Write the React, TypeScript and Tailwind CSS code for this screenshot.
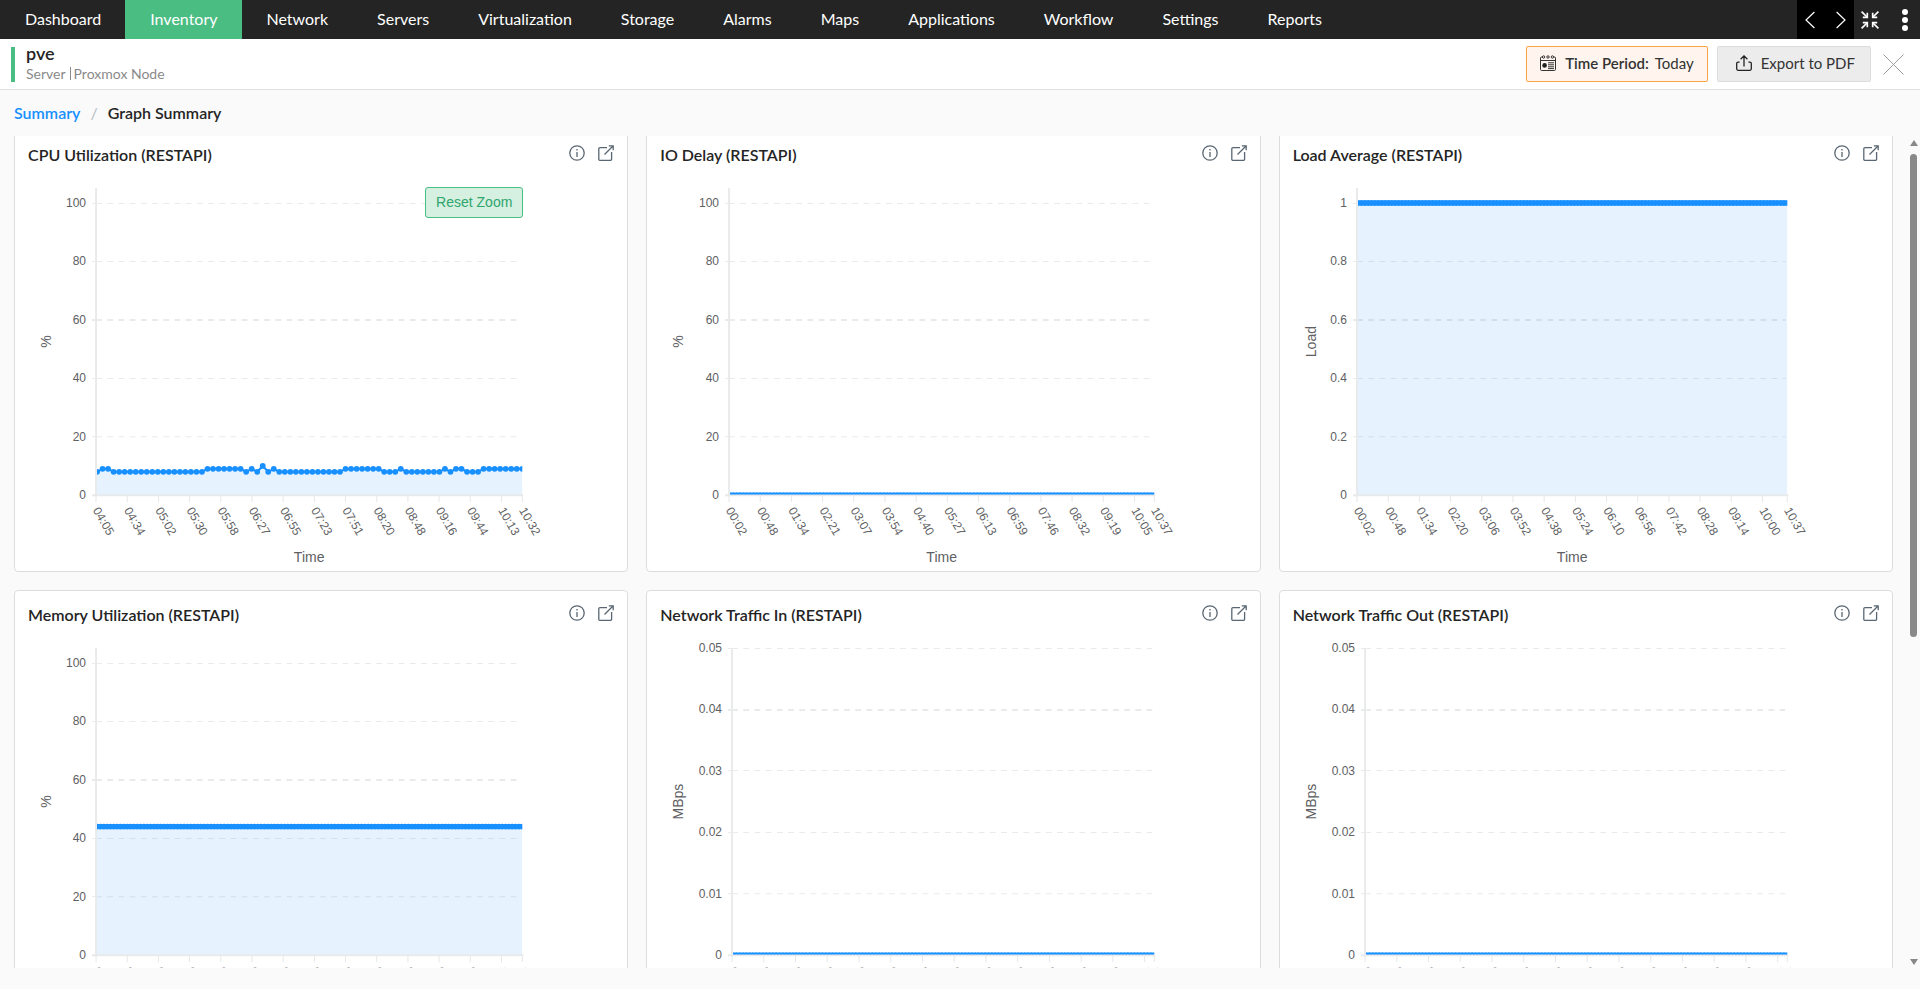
import { useState } from "react";

const NAV_ITEMS = [
  "Dashboard",
  "Inventory",
  "Network",
  "Servers",
  "Virtualization",
  "Storage",
  "Alarms",
  "Maps",
  "Applications",
  "Workflow",
  "Settings",
  "Reports",
];

type ChartData = {
  id: string;
  title: string;
  unit: string;
  // left edge of the plot area
  left: number;
  yLabels: string[];
  // y of the highest gridline, the lowest one is always BOTTOM
  yTop: number;
  axisTop: number;
  boldRow: number;
  xStep: number;
  xLabels: string[];
  values: number[];
  max: number;
  zoomed?: boolean;
};

const RIGHT = 507;
const BOTTOM = 319;

const repeat = (value: number, times: number): number[] => Array(times).fill(value);

const cpuValues = [
  8, 9, 9, ...repeat(8, 17), ...repeat(9, 7), 8, 9, 8, 10, 8, 9, ...repeat(8, 12),
  ...repeat(9, 7), ...repeat(8, 3), 9, ...repeat(8, 7), 9, 8, 9, 9, ...repeat(8, 3), ...repeat(9, 8),
];

const percent = ["100", "80", "60", "40", "20", "0"];
const mbps = ["0.05", "0.04", "0.03", "0.02", "0.01", "0"];

const cpuTimes = ["04:05", "04:34", "05:02", "05:30", "05:58", "06:27", "06:55", "07:23", "07:51", "08:20", "08:48", "09:16", "09:44", "10:13", "10:32"];
const ioTimes = ["00:02", "00:48", "01:34", "02:21", "03:07", "03:54", "04:40", "05:27", "06:13", "06:59", "07:46", "08:32", "09:19", "10:05", "10:37"];
const loadTimes = ["00:02", "00:48", "01:34", "02:20", "03:06", "03:52", "04:38", "05:24", "06:10", "06:56", "07:42", "08:28", "09:14", "10:00", "10:37"];

const CHARTS: ChartData[] = [
  { id: "cpu", title: "CPU Utilization (RESTAPI)", unit: "%", left: 81, yLabels: percent, yTop: 27, axisTop: 12, boldRow: 2, xStep: 31.17, xLabels: cpuTimes, values: cpuValues, max: 100, zoomed: true },
  { id: "io", title: "IO Delay (RESTAPI)", unit: "%", left: 82, yLabels: percent, yTop: 27, axisTop: 12, boldRow: 2, xStep: 31.17, xLabels: ioTimes, values: repeat(0, 128), max: 100 },
  { id: "load", title: "Load Average (RESTAPI)", unit: "Load", left: 77, yLabels: ["1", "0.8", "0.6", "0.4", "0.2", "0"], yTop: 27, axisTop: 12, boldRow: 2, xStep: 31.17, xLabels: loadTimes, values: repeat(1, 128), max: 1 },
  { id: "memory", title: "Memory Utilization (RESTAPI)", unit: "%", left: 81, yLabels: percent, yTop: 27, axisTop: 12, boldRow: 2, xStep: 31.17, xLabels: ioTimes, values: repeat(44, 128), max: 100 },
  { id: "net-in", title: "Network Traffic In (RESTAPI)", unit: "MBps", left: 85, yLabels: mbps, yTop: 12, axisTop: 12, boldRow: 1, xStep: 31.72, xLabels: ioTimes, values: repeat(0, 128), max: 0.05 },
  { id: "net-out", title: "Network Traffic Out (RESTAPI)", unit: "MBps", left: 85, yLabels: mbps, yTop: 12, axisTop: 12, boldRow: 1, xStep: 31.72, xLabels: ioTimes, values: repeat(0, 128), max: 0.05 },
];

function AreaChart({ chart }: { chart: ChartData }) {
  const { id, left, yTop, axisTop, values, max } = chart;
  const points = values.map((value, i) => ({
    x: left + 1 + (i * (RIGHT - left - 1)) / (values.length - 1),
    y: BOTTOM - (value / max) * (BOTTOM - yTop),
  }));
  const line = points.map((p) => `${p.x},${p.y}`).join(" ");
  const rowHeight = (BOTTOM - yTop) / (chart.yLabels.length - 1);
  const tickX = (i: number) => (i === chart.xLabels.length - 1 ? RIGHT : left + i * chart.xStep);
  const middle = (left + RIGHT) / 2;

  return (
    <svg viewBox="0 0 612 395" className="block h-auto w-full font-['Liberation_Sans',Arial,sans-serif]" role="img" aria-label={chart.title}>
      <clipPath id={`${id}-plot`}>
        <rect x={left + 1} y={0} width={RIGHT - left - 1} height={BOTTOM - 1} />
      </clipPath>

      {/* Gridlines and y labels */}
      {chart.yLabels.map((label, i) => {
        const y = yTop + i * rowHeight;
        const bold = i === chart.boldRow;
        const lineY = bold ? Math.ceil(y) : Math.floor(y) + 0.5;
        return (
          <g key={label} stroke="#e9eaeb" strokeWidth={bold ? 2 : 1}>
            {i < chart.yLabels.length - 1 && (
              <line x1={left} x2={RIGHT - 2} y1={lineY} y2={lineY} strokeDasharray="5.8 5.4" />
            )}
            <line x1={left - 4} x2={left} y1={lineY} y2={lineY} />
            <text x={left - 10} y={Math.round(y) + 4} textAnchor="end" fontSize={12} fill="#5e6063" stroke="none">
              {label}
            </text>
          </g>
        );
      })}

      {/* Axes */}
      <line x1={left} x2={left} y1={axisTop} y2={BOTTOM + 1} stroke="#e9eaeb" strokeWidth={2} />
      <line x1={left - 4} x2={RIGHT + 1} y1={BOTTOM} y2={BOTTOM} stroke="#e9eaeb" strokeWidth={2} />
      {chart.xLabels.map((label, i) => (
        <g key={label}>
          <line x1={tickX(i)} x2={tickX(i)} y1={BOTTOM} y2={BOTTOM + 7} stroke="#e6e7e8" />
          <text transform={`translate(${tickX(i)} ${BOTTOM + 13}) rotate(60)`} y={4} fontSize={12} fill="#5e6063">
            {label}
          </text>
        </g>
      ))}

      {/* Series */}
      <g clipPath={`url(#${id}-plot)`}>
        <polygon points={`${left},${BOTTOM} ${line} ${RIGHT},${BOTTOM}`} fill="#1890ff" fillOpacity={0.11} />
        <polyline points={line} fill="none" stroke="#1890ff" strokeWidth={values.length > 100 ? 4 : 2} />
        {points.map((p, i) => (
          <circle key={i} cx={p.x} cy={p.y} r={2.9} fill="#1890ff" />
        ))}
      </g>

      <text x={middle} y={386} textAnchor="middle" fontSize={14} fill="#5e6063">
        Time
      </text>
      <text transform={`translate(36 ${(axisTop + BOTTOM) / 2}) rotate(-90)`} textAnchor="middle" fontSize={14} fill="#5e6063">
        {chart.unit}
      </text>
    </svg>
  );
}

function InfoIcon() {
  return (
    <svg viewBox="0 0 16 16" className="size-4" fill="none" stroke="currentColor" strokeWidth={1.3}>
      <circle cx="8" cy="8" r="7.2" />
      <path d="M8 7v5M8 4v1.4" />
    </svg>
  );
}

function OpenIcon() {
  return (
    <svg viewBox="0 0 16 16" className="size-4" fill="none" stroke="currentColor" strokeWidth={1.3}>
      <path d="M9 2.6H2A1.2 1.2 0 0 0 .8 3.8v10.4A1.2 1.2 0 0 0 2 15.4h10.4a1.2 1.2 0 0 0 1.2-1.2V7" />
      <path d="M6.5 9.5 15 1M10.8.8h4.4v4.4" />
    </svg>
  );
}

function ChartCard({ chart }: { chart: ChartData }) {
  const [zoomed, setZoomed] = useState(Boolean(chart.zoomed));

  return (
    <section className="relative rounded-[4px] border border-[#dcddde] bg-white">
      <header className="flex h-[45px] items-start justify-between px-[13px] pt-[14px]">
        <h2 className="text-[16px] leading-5 font-semibold text-[#242424]">{chart.title}</h2>
        <div className="flex gap-[13px] text-[#5a6772]">
          <button type="button" aria-label={`About ${chart.title}`}>
            <InfoIcon />
          </button>
          <button type="button" aria-label={`Open ${chart.title}`}>
            <OpenIcon />
          </button>
        </div>
      </header>
      <AreaChart chart={chart} />
      {zoomed && (
        <button
          type="button"
          onClick={() => setZoomed(false)}
          className="absolute top-14 right-[104px] h-[31px] rounded-[3px] border border-[#49bd82] bg-[#d5efe1] px-[10px] pb-[2px] font-['Liberation_Sans',Arial,sans-serif] text-[14px] leading-none text-[#2fa56d]"
        >
          Reset Zoom
        </button>
      )}
    </section>
  );
}

function TopNav() {
  return (
    <nav className="flex h-[39px] items-stretch justify-between bg-[#242424] text-white">
      <div className="flex">
        {NAV_ITEMS.map((item) => (
          <a
            key={item}
            href="#"
            className={`flex items-center pr-6 pb-[2px] pl-[25px] text-[16px] ${item === "Inventory" ? "bg-[#49bd82]" : ""}`}
          >
            {item}
          </a>
        ))}
      </div>
      <div className="flex">
        <div className="flex w-[57px] items-center justify-between bg-black px-2">
          <button type="button" aria-label="Previous">
            <svg viewBox="0 0 10 18" className="h-[18px] w-[10px]" fill="none" stroke="currentColor" strokeWidth={1.2}>
              <path d="M9.4 1 1 9l8.4 8" />
            </svg>
          </button>
          <button type="button" aria-label="Next">
            <svg viewBox="0 0 10 18" className="h-[18px] w-[10px]" fill="none" stroke="currentColor" strokeWidth={1.2}>
              <path d="M.6 1 9 9l-8.400 8" />
            </svg>
          </button>
        </div>
        <button type="button" aria-label="Exit full screen" className="ml-[7px]">
          <svg viewBox="0 0 18 18" className="size-[18px]" fill="none" stroke="currentColor" strokeWidth={1.7}>
            <path d="M.6.6 6 6M17.4.6 12 6M.6 17.4 6 12M17.4 17.4 12 12" />
            <path d="M6.3 1.8v4.5H1.8M11.7 1.8v4.5h4.5M6.3 16.2v-4.5H1.8M11.7 16.2v-4.5h4.5" />
          </svg>
        </button>
        <button type="button" aria-label="More" className="mr-3 ml-[23px]">
          <svg viewBox="0 0 6 22" className="h-[22px] w-[6px]" fill="currentColor">
            <circle cx="3" cy="3" r="3" />
            <circle cx="3" cy="11" r="3" />
            <circle cx="3" cy="19" r="3" />
          </svg>
        </button>
      </div>
    </nav>
  );
}

function DeviceHeader() {
  return (
    <div className="flex h-[51px] items-center justify-between border-b border-[#dfdfdf] bg-white pr-4 pl-[11px]">
      <div className="flex gap-[11px]">
        <div className="my-[2px] w-1 bg-[#49bd82]" />
        <div>
          <h1 className="text-[18px] leading-4 font-semibold text-[#242424]">pve</h1>
          <p className="mt-[3px] flex items-center text-[14px] leading-5 text-[#8a8a8a]">
            Server
            <span className="mr-[3px] ml-1 h-[13px] w-px bg-[#8a8a8a]" />
            Proxmox Node
          </p>
        </div>
      </div>
      <div className="flex items-center text-[15px] text-[#333]">
        <button type="button" className="flex h-9 items-center rounded-[2px] border border-[#f9a544] bg-[#fff5ee] px-[13px] pb-[2px]">
          <svg viewBox="0 0 16 16" className="mr-[9px] size-4" fill="none" stroke="#333" strokeWidth={1}>
            <path d="M2.4 2H1.6A1.1 1.1 0 0 0 .5 3.1v11.3a1.1 1.1 0 0 0 1.1 1.1h12.8a1.1 1.1 0 0 0 1.1-1.1V3.1A1.1 1.1 0 0 0 14.4 2h-.8" />
            <path d="M.5 5.5h15M8 7.8h6M8 9.8h6M8 11.8h6M8 13.6h6" />
            <circle cx="3.6" cy="2" r="1.2" />
            <circle cx="8" cy="2" r="1.2" />
            <circle cx="12.4" cy="2" r="1.2" />
            <circle cx="4.6" cy="10.4" r="2.3" fill="#222" stroke="none" />
          </svg>
          <span className="mr-[6px] font-semibold">Time Period:</span>
          Today
        </button>
        <button type="button" className="ml-[9px] flex h-9 items-center rounded-[2px] border border-[#dcdcdc] bg-[#ececec] pr-[15px] pb-[2px] pl-[18px]">
          <svg viewBox="0 0 16 16" className="mr-[9px] size-4" fill="none" stroke="#222" strokeWidth={1.3}>
            <path d="M3.6 7.2H2A1.3 1.3 0 0 0 .7 8.500v5.3a1.5 1.5 0 0 0 1.5 1.5h11.6a1.5 1.5 0 0 0 1.5-1.5V8.500A1.3 1.3 0 0 0 14 7.2h-1.600M8 11.5V1.2M4.6 4.2 8 .9l3.4 3.3" />
          </svg>
          Export to PDF
        </button>
        <button type="button" aria-label="Close" className="ml-3">
          <svg viewBox="0 0 21 21" className="size-[21px]" fill="none" stroke="#9c9c9c" strokeWidth={1}>
            <path d="M.5.5l20 20M20.5.5l-20 20" />
          </svg>
        </button>
      </div>
    </div>
  );
}

function ScrollTrack() {
  return (
    <div className="flex w-[9px] flex-col items-center pt-1 pb-[3px] text-[#888]" aria-hidden="true">
      <svg viewBox="0 0 8 6" className="h-[6px] w-2" fill="currentColor">
        <path d="M4 0 8 6H0z" />
      </svg>
      <div className="mt-2 flex-1">
        <div className="h-3/5 w-[7px] rounded-full bg-[#888]" />
      </div>
      <svg viewBox="0 0 8 6" className="h-[6px] w-2" fill="currentColor">
        <path d="M4 6 0 0h8z" />
      </svg>
    </div>
  );
}

export default function App() {
  return (
    <div className="flex h-screen flex-col bg-[#fafafa] pb-[21px] font-[Lato,sans-serif]">
      <TopNav />
      <DeviceHeader />

      <div className="flex h-[46px] shrink-0 items-center pl-[14px] text-[16px] font-semibold text-[#242424]">
        <a href="#" className="text-[#1890ff]">
          Summary
        </a>
        <span className="mx-[10px] font-normal text-[#b5bcc3]">/</span>
        <span>Graph Summary</span>
      </div>

      <main className="flex min-h-0 flex-1 justify-between pr-[2px] pl-[14px]">
        <div className="mr-4 flex-1 overflow-hidden">
          <div className="-mt-[6px] grid grid-cols-3 gap-[18px]">
            {CHARTS.map((chart) => (
              <ChartCard key={chart.id} chart={chart} />
            ))}
          </div>
        </div>
        <ScrollTrack />
      </main>
    </div>
  );
}
